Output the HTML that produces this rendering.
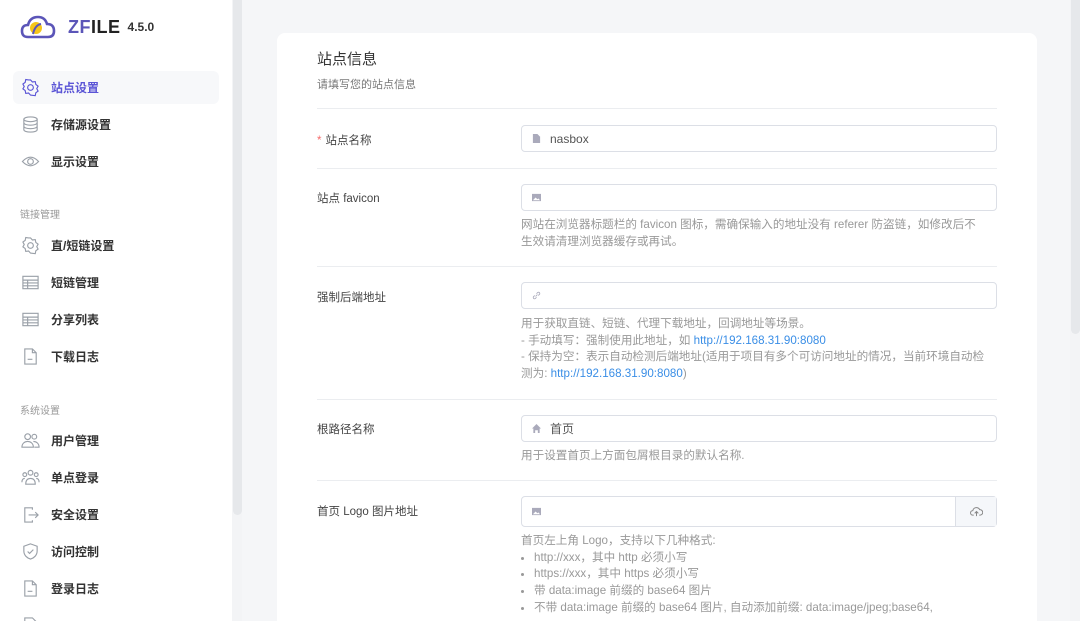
<!DOCTYPE html>
<html style="width:1080px;height:621px;overflow:hidden"><head><meta charset="utf-8"><style>
*{margin:0;padding:0;box-sizing:border-box}
body{width:1080px;height:621px;overflow:hidden;background:#f5f6f8;font-family:"Liberation Sans","Noto Sans CJK SC",sans-serif;position:relative}
.side{position:absolute;left:0;top:0;width:232px;height:621px;background:#fff;overflow:hidden}
.sb{position:absolute;left:232px;top:0;width:10px;height:621px;background:#f3f4f6}
.sb i{position:absolute;left:1px;top:0;width:9px;height:515px;background:#e6e8eb;border-radius:0 0 5px 5px}
.rs{position:absolute;left:1070px;top:0;width:10px;height:621px;background:#f3f4f6}
.rs i{position:absolute;left:1px;top:0;width:9px;height:334px;background:#e6e8eb;border-radius:0 0 5px 5px}
.logo{position:absolute;left:20px;top:14px;display:flex;align-items:center}
.logo b{font-size:18px;font-weight:900;color:#5b55b8;margin-left:12px;letter-spacing:0.5px}
.logo b span{color:#222}
.logo em{font-style:normal;font-weight:bold;font-size:12px;color:#333;margin-left:7px}
.item{position:absolute;left:13px;width:206px;height:33px;display:flex;align-items:center;padding-left:8px;font-size:12px;color:#333;font-weight:bold;border-radius:6px}
.item svg{width:19px;height:19px;margin-right:11px;stroke:#9aa0a8;fill:none;stroke-width:1.2}
.item.act{background:#f7f8fa;color:#5b55d6}
.item.act svg{stroke:#5b55d6}
.grp{position:absolute;left:20px;font-size:10px;color:#999}
.card{position:absolute;left:277px;top:33px;width:760px;height:620px;background:#fff;border-radius:8px}
.t{position:absolute;left:317px;top:48px;font-size:15px;color:#333}
.st{position:absolute;left:317px;top:76px;font-size:11px;color:#777}
.hr{position:absolute;left:317px;width:680px;height:1px;background:#ebedf0}
.lab{position:absolute;left:317px;font-size:11.5px;color:#444}
.lab s{text-decoration:none;color:#f56c6c;margin-right:4px}
.in{position:absolute;left:521px;width:476px;border:1px solid #dcdfe6;border-radius:4px;background:#fff;display:flex;align-items:center;padding-left:10px;font-size:12px;color:#555}
.in svg{width:9px;height:9px;margin-right:9px;fill:#aab}
.help{position:absolute;left:521px;font-size:11.6px;color:#999;line-height:16.7px;width:472px}
.help a{color:#3a8ee6;text-decoration:none}
.help ul{padding-left:13px}
</style></head><body>
<div class="side">
 <div class="logo">
  <svg width="36" height="26" viewBox="0 0 36 26"><path d="M8 23 Q2 23 2 17 Q2 11 8 11 Q10 3 18 3 Q25 3 27 10 Q34 10 34 17 Q34 23 28 23 Z" fill="none" stroke="#5b55b8" stroke-width="2.6"/><circle cx="16" cy="14" r="6" fill="#f5c518"/><path d="M13 20 Q15 11 21 10" stroke="#5b55b8" stroke-width="2" fill="none"/></svg>
  <b>ZF<span>ILE</span></b><em>4.5.0</em>
 </div>
 <div class="item act" style="top:71px"><svg viewBox="0 0 20 20"><circle cx="10" cy="10" r="3"/><path d="M10 2l2 2.2 3-.4.6 3 2.4 1.8-1.4 2.6 1.4 2.6-2.4 1.8-.6 3-3-.4L10 18l-2-2.2-3 .4-.6-3L2 11.4 3.4 9 2 6.4l2.4-1.8.6-3 3 .4z"/></svg>站点设置</div>
 <div class="item" style="top:108px"><svg viewBox="0 0 20 20"><ellipse cx="10" cy="4.5" rx="7" ry="2.5"/><path d="M3 4.5v11c0 1.4 3 2.5 7 2.5s7-1.1 7-2.5v-11M3 8.2c0 1.4 3 2.5 7 2.5s7-1.1 7-2.5M3 11.9c0 1.4 3 2.5 7 2.5s7-1.1 7-2.5"/></svg>存储源设置</div>
 <div class="item" style="top:145px"><svg viewBox="0 0 20 20"><path d="M1.5 10Q10 1 18.5 10Q10 19 1.5 10Z"/><circle cx="10" cy="10" r="3"/></svg>显示设置</div>
 <div class="grp" style="top:206px">链接管理</div>
 <div class="item" style="top:229px"><svg viewBox="0 0 20 20"><circle cx="10" cy="10" r="3"/><path d="M10 2l2 2.2 3-.4.6 3 2.4 1.8-1.4 2.6 1.4 2.6-2.4 1.8-.6 3-3-.4L10 18l-2-2.2-3 .4-.6-3L2 11.4 3.4 9 2 6.4l2.4-1.8.6-3 3 .4z"/></svg>直/短链设置</div>
 <div class="item" style="top:266px"><svg viewBox="0 0 20 20"><rect x="2" y="3.5" width="16" height="13"/><path d="M2 7.5h16M2 10.5h16M2 13.5h16M7 7.5v9"/></svg>短链管理</div>
 <div class="item" style="top:303px"><svg viewBox="0 0 20 20"><rect x="2" y="3.5" width="16" height="13"/><path d="M2 7.5h16M2 10.5h16M2 13.5h16M7 7.5v9"/></svg>分享列表</div>
 <div class="item" style="top:340px"><svg viewBox="0 0 20 20"><path d="M4 2h8l4 4v12H4z M12 2v4h4M7 13h5"/></svg>下载日志</div>
 <div class="grp" style="top:402px">系统设置</div>
 <div class="item" style="top:424px"><svg viewBox="0 0 20 20"><circle cx="7" cy="6" r="3"/><circle cx="14" cy="6" r="2.5"/><path d="M1 17c0-4 3-6 6-6s6 2 6 6zM13 11c3 0 6 2 6 6h-5"/></svg>用户管理</div>
 <div class="item" style="top:461px"><svg viewBox="0 0 20 20"><circle cx="10" cy="5" r="2.5"/><circle cx="4" cy="7" r="2"/><circle cx="16" cy="7" r="2"/><path d="M5 17c0-4 2-6 5-6s5 2 5 6zM1 15c0-3 1.5-4 3-4M19 15c0-3-1.5-4-3-4"/></svg>单点登录</div>
 <div class="item" style="top:498px"><svg viewBox="0 0 20 20"><path d="M12 5V3H4v15h8v-2M8 10.5h10M15 7.5l3 3-3 3"/></svg>安全设置</div>
 <div class="item" style="top:535px"><svg viewBox="0 0 20 20"><path d="M10 2l7 2.5v5c0 4.5-3.5 7.5-7 8.5-3.5-1-7-4-7-8.5v-5z M7 10l2 2 4-4"/></svg>访问控制</div>
 <div class="item" style="top:572px"><svg viewBox="0 0 20 20"><path d="M4 2h8l4 4v12H4z M12 2v4h4M7 13h5"/></svg>登录日志</div>
 <div class="item" style="top:609px"><svg viewBox="0 0 20 20"><path d="M4 2h8l4 4v12H4z"/></svg></div>
</div>
<div class="sb"><i></i></div>
<div class="rs"><i></i></div>
<div class="card"></div>
<div class="t">站点信息</div>
<div class="st">请填写您的站点信息</div>
<div class="hr" style="top:108px"></div>
<div class="lab" style="top:132px"><s>*</s>站点名称</div>
<div class="in" style="top:125px;height:27px"><svg viewBox="0 0 10 10"><path d="M1 0h5l3 3v7H1z"/></svg>nasbox</div>
<div class="hr" style="top:168px"></div>
<div class="lab" style="top:190px">站点 favicon</div>
<div class="in" style="top:184px;height:27px"><svg viewBox="0 0 10 10"><path d="M0 1h10v8H0z" /><path d="M1 8l3-3 2 2 1-1 2 2z" fill="#fff"/></svg></div>
<div class="help" style="top:217px">网站在浏览器标题栏的 favicon 图标，需确保输入的地址没有 referer 防盗链，如修改后不<br>生效请清理浏览器缓存或再试。</div>
<div class="hr" style="top:266px"></div>
<div class="lab" style="top:289px">强制后端地址</div>
<div class="in" style="top:282px;height:27px"><svg viewBox="0 0 10 10" style="fill:none;stroke:#aab;stroke-width:1"><path d="M4 6l2-2M3 5L1.5 6.5a1.5 1.5 0 002 2L5 7M7 5l1.5-1.5a1.5 1.5 0 00-2-2L5 3"/></svg></div>
<div class="help" style="top:316px">用于获取直链、短链、代理下载地址，回调地址等场景。<br>- 手动填写：强制使用此地址，如 <a>http://192.168.31.90:8080</a><br>- 保持为空：表示自动检测后端地址(适用于项目有多个可访问地址的情况，当前环境自动检<br>测为: <a>http://192.168.31.90:8080</a>)</div>
<div class="hr" style="top:399px"></div>
<div class="lab" style="top:421px">根路径名称</div>
<div class="in" style="top:415px;height:27px"><svg viewBox="0 0 10 10"><path d="M5 0l5 5H8.5v5h-2V7h-3v3h-2V5H0z"/></svg>首页</div>
<div class="help" style="top:448px">用于设置首页上方面包屑根目录的默认名称.</div>
<div class="hr" style="top:480px"></div>
<div class="lab" style="top:503px">首页 Logo 图片地址</div>
<div class="in" style="top:496px;height:31px"><svg viewBox="0 0 10 10"><path d="M0 1h10v8H0z"/><path d="M1 8l3-3 2 2 1-1 2 2z" fill="#fff"/></svg>
<div style="position:absolute;right:0;top:0;width:41px;height:29px;background:#f5f7fa;border-left:1px solid #dcdfe6;display:flex;align-items:center;justify-content:center"><svg viewBox="0 0 14 12" style="width:13px;height:11px;fill:none;stroke:#888;stroke-width:1.1;margin:0"><path d="M4 10H3a2.5 2.5 0 010-5 4 4 0 017.5-1A2.8 2.8 0 0111 10h-1M7 11V6M5 8l2-2 2 2"/></svg></div></div>
<div class="help" style="top:533px">首页左上角 Logo，支持以下几种格式:<ul><li>http://xxx，其中 http 必须小写</li><li>https://xxx，其中 https 必须小写</li><li>带 data:image 前缀的 base64 图片</li><li>不带 data:image 前缀的 base64 图片, 自动添加前缀: data:image/jpeg;base64,</li></ul></div>
</body></html>
